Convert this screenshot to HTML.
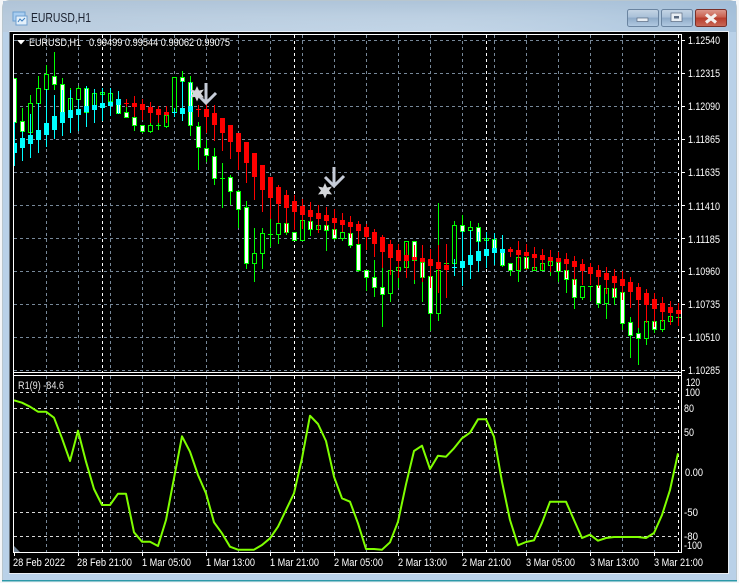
<!DOCTYPE html>
<html><head><meta charset="utf-8"><title>EURUSD,H1</title>
<style>
html,body{margin:0;padding:0;background:#f4f6f8;width:739px;height:583px;overflow:hidden}
svg{display:block;position:absolute;left:0;top:0}
text{font-family:"Liberation Sans",sans-serif;font-size:11px;fill:#fff}
</style></head><body>
<svg width="739" height="583" viewBox="0 0 739 583" xmlns="http://www.w3.org/2000/svg">
<defs>
<linearGradient id="tb" x1="0" y1="0" x2="0" y2="1"><stop offset="0" stop-color="#a9c0d6"/><stop offset=".5" stop-color="#bcd0e2"/><stop offset="1" stop-color="#c3d6e8"/></linearGradient>
<linearGradient id="tb2" x1="0" y1="0" x2="1" y2="0"><stop offset="0" stop-color="#b4c6d8" stop-opacity=".6"/><stop offset=".6" stop-color="#c0d2e4" stop-opacity=".2"/><stop offset="1" stop-color="#9dbbd8" stop-opacity=".7"/></linearGradient>
<linearGradient id="bt" x1="0" y1="0" x2="0" y2="1"><stop offset="0" stop-color="#c5d5e5"/><stop offset=".45" stop-color="#a9c0d8"/><stop offset=".5" stop-color="#8eaac8"/><stop offset="1" stop-color="#b3cbe2"/></linearGradient>
<linearGradient id="cl" x1="0" y1="0" x2="0" y2="1"><stop offset="0" stop-color="#dd9a8e"/><stop offset=".45" stop-color="#c9604f"/><stop offset=".5" stop-color="#b83c2b"/><stop offset="1" stop-color="#c96a58"/></linearGradient>
<clipPath id="up"><rect x="14" y="35" width="667" height="337"/></clipPath>
<clipPath id="lo"><rect x="14" y="376" width="667" height="176"/></clipPath>
</defs>
<!-- window frame -->
<path d="M3 580V8Q3 2 9 1H730Q736 2 736 8V580Z" fill="#b9d1e8"/>
<path d="M2.5 581V8Q2.500 1.500 9 .5H730Q736.500 1.500 736.500 8V581" fill="none" stroke="#5f7f8f" stroke-width="1" opacity=".4"/>
<rect x="3" y="1" width="733" height="31" fill="url(#tb)"/>
<rect x="3" y="1" width="733" height="31" fill="url(#tb2)"/>
<rect x="2" y="580" width="735" height="1.500" fill="#2d98a8"/>
<rect x="9" y="31" width="720" height="543" fill="#e8eef4"/>
<rect x="10" y="32" width="718" height="541" fill="#000"/>
<rect x="9" y="32" width="1" height="541" fill="#6b7680"/>
<!-- title -->
<rect x="13" y="12" width="12" height="9" fill="#a8cdf0" stroke="#6a9ed0"/>
<rect x="16" y="16" width="11" height="9" fill="#e4f0fa" stroke="#6f9fd0"/>
<path d="M18 22l2-3 2 2 3-3" fill="none" stroke="#3f80c0"/>
<text x="31" y="22" style="font-size:12.500px;fill:#1c2230" textLength="60" lengthAdjust="spacingAndGlyphs">EURUSD,H1</text>
<!-- buttons -->
<rect x="627.500" y="9.500" width="31" height="17" rx="2" fill="url(#bt)" stroke="#6a84a0"/>
<rect x="637" y="18" width="11" height="3.500" fill="#e8eef4" stroke="#5a6a80" stroke-width=".7"/>
<rect x="661.500" y="9.500" width="31" height="17" rx="2" fill="url(#bt)" stroke="#6a84a0"/>
<rect x="671" y="13" width="11" height="8.500" fill="#e8eef4" stroke="#5a6a80" stroke-width=".7"/>
<rect x="674" y="16" width="5" height="2.500" fill="#5a6a80"/>
<rect x="695.500" y="9.500" width="31" height="17" rx="2" fill="url(#cl)" stroke="#7a3028"/>
<path d="M706 14.500l10 8M716 14.500l-10 8" stroke="#f4f0ee" stroke-width="3.200" fill="none"/>
<!-- grid upper -->
<g clip-path="url(#up)" fill="none" stroke="#778899" stroke-dasharray="3 3" shape-rendering="crispEdges">
<path d="M14 40.500H678M14 73.500H678M14 106.500H678M14 139.500H678M14 172.500H678M14 205.500H678M14 238.500H678M14 271.500H678M14 304.500H678M14 337.500H678M14 370.500H678"/>
<path d="M46.500 35V372M78.500 35V372M110.500 35V372M142.500 35V372M174.500 35V372M206.500 35V372M238.500 35V372M270.500 35V372M302.500 35V372M334.500 35V372M366.500 35V372M398.500 35V372M430.500 35V372M462.500 35V372M494.500 35V372M526.500 35V372M558.500 35V372M590.500 35V372M622.500 35V372M654.500 35V372"/>
<path stroke="#fff" stroke-dasharray="3 3" d="M102.500 35V372M294.500 35V372M486.500 35V372M678.500 35V372"/>
</g>
<!-- candles upper -->
<g clip-path="url(#up)" shape-rendering="crispEdges" fill="none">
<path stroke="#0f0" d="M14.500 78V125M22.500 108V138M30.500 95V132M38.500 76V103M46.500 65V89M54.500 52V90M62.500 78V121M70.500 88V110M78.500 86V99M86.500 86V112M94.500 92V105M102.500 88V94M110.500 90V101M118.500 97V113M126.500 107V117M134.500 117V131M142.500 125V133M150.500 122V133M158.500 122V130M166.500 112V128M174.500 77V112M182.500 71V81M190.500 76V136M198.500 122V170M206.500 140V162M214.500 148V185M222.500 163V208M230.500 175V205M238.500 190V228M246.500 201V269M254.500 228V282M262.500 228V269M270.500 219V247M278.500 223V244M286.500 223V235M294.500 232V241M302.500 220V240M310.500 221V236M318.500 225V232M326.500 225V251M334.500 229V240M342.500 232V241M350.500 233V248M358.500 244V272M366.500 270V291M374.500 260V297M382.500 268V327M390.500 270V302M398.500 267V288M406.500 241V267M414.500 241V284M422.500 262V302M430.500 276V331M438.500 203V321M446.500 263V298M454.500 221V263M462.500 215V231M470.500 221V230M478.500 223V241M486.500 238V240M494.500 239V252M502.500 250V267M510.500 263V276M518.500 257V282M526.500 257V270M534.500 267V270M542.500 263V270M550.500 261V276M558.500 262V282M566.500 270V293M574.500 279V309M582.500 286V300M590.500 286V301M598.500 285V308M606.500 288V319M614.500 288V305M622.500 292V330M630.500 317V358M638.500 318V365M646.500 321V345M654.500 321V333M662.500 320V332M670.500 316V321M156 125.500H161M220 178.500H225M268 234.500H273M444 263.500H449M588 286.500H593M676 317.500H681"/>
<!-- hollow -->
<path stroke="#0f0" fill="#000" d="M28.500 103.500h4v29h-4zM36.500 88.500h4v15h-4zM44.500 74.500h4v15h-4zM68.500 98.500h4v12h-4zM76.500 88.500h4v11h-4zM92.500 93.500h4v12h-4zM100.500 92.500h4v2h-4zM108.500 93.500h4v8h-4zM148.500 125.500h4v6h-4zM164.500 115.500h4v11h-4zM172.500 77.500h4v35h-4zM252.500 253.500h4v10h-4zM260.500 233.500h4v20h-4zM276.500 223.500h4v11h-4zM300.500 220.500h4v20h-4zM316.500 225.500h4v4h-4zM340.500 232.500h4v6h-4zM388.500 270.500h4v23h-4zM396.500 267.500h4v3h-4zM404.500 241.500h4v26h-4zM436.500 270.500h4v43h-4zM452.500 225.500h4v38h-4zM468.500 227.500h4v3h-4zM484.500 238.500h4v2h-4zM516.500 257.500h4v13h-4zM532.500 267.500h4v3h-4zM540.500 263.500h4v7h-4zM548.500 261.500h4v4h-4zM580.500 286.500h4v11h-4zM604.500 288.500h4v15h-4zM644.500 321.500h4v17h-4zM660.500 320.500h4v9h-4zM668.500 316.500h4v5h-4z"/>
<!-- white -->
<path stroke="#0f0" fill="#fff" d="M12.500 78.500h4v44h-4zM20.500 121.500h4v10h-4zM52.500 76.500h4v8h-4zM60.500 84.500h4v37h-4zM84.500 88.500h4v24h-4zM116.500 99.500h4v14h-4zM124.500 112.500h4v5h-4zM132.500 117.500h4v8h-4zM140.500 125.500h4v6h-4zM180.500 77.500h4v4h-4zM188.500 82.500h4v43h-4zM196.500 126.500h4v21h-4zM204.500 148.500h4v7h-4zM212.500 156.500h4v22h-4zM228.500 177.500h4v14h-4zM236.500 191.500h4v18h-4zM244.500 207.500h4v56h-4zM284.500 223.500h4v9h-4zM292.500 232.500h4v8h-4zM308.500 221.500h4v8h-4zM324.500 225.500h4v5h-4zM332.500 229.500h4v9h-4zM348.500 233.500h4v12h-4zM356.500 244.500h4v26h-4zM364.500 270.500h4v7h-4zM372.500 277.500h4v10h-4zM380.500 287.500h4v7h-4zM412.500 241.500h4v19h-4zM420.500 262.500h4v15h-4zM428.500 276.500h4v37h-4zM460.500 225.500h4v6h-4zM476.500 227.500h4v14h-4zM492.500 239.500h4v13h-4zM500.500 250.500h4v15h-4zM508.500 263.500h4v7h-4zM524.500 257.500h4v11h-4zM556.500 262.500h4v9h-4zM564.500 270.500h4v9h-4zM572.500 279.500h4v18h-4zM596.500 285.500h4v18h-4zM612.500 288.500h4v9h-4zM620.500 292.500h4v31h-4zM628.500 322.500h4v13h-4zM636.500 333.500h4v5h-4zM652.500 321.500h4v8h-4z"/>
<!-- cyan -->
<path stroke="#0ff" d="M14.500 122V166M22.500 131V161M30.500 114V158M38.500 103V153M46.500 89V147M54.500 95V139M62.500 90V136M70.500 90V133M78.500 99V131M86.500 86V127M94.500 89V123M102.500 88V121M110.500 88V116M118.500 91V114M174.500 108V117M182.500 81V121M190.500 82V125M454.500 259V276M462.500 231V286M470.500 230V279M478.500 232V272M486.500 232V268M494.500 233V265M502.500 235V265"/>
<path fill="#0ff" d="M12 143h5v10h-5zM20 138h5v10h-5zM28 135h5v9h-5zM36 130h5v10h-5zM44 123h5v12h-5zM52 116h5v14h-5zM60 112h5v11h-5zM68 110h5v8h-5zM76 109h5v6h-5zM84 106h5v6h-5zM92 105h5v5h-5zM100 103h5v5h-5zM108 102h5v4h-5zM116 99h5v6h-5zM172 112h5v1h-5zM180 108h5v6h-5zM188 106h5v6h-5zM452 267h5v1h-5zM460 261h5v7h-5zM468 255h5v10h-5zM476 251h5v10h-5zM484 249h5v7h-5zM492 248h5v5h-5zM500 249h5v4h-5z"/>
<!-- red -->
<path stroke="#f00" d="M126.500 99V107M134.500 96V117M142.500 99V120M150.500 102V123M158.500 106V123M166.500 106V123M198.500 105V117M206.500 102V133M214.500 105V141M222.500 118V151M230.500 125V159M238.500 133V170M246.500 142V183M254.500 153V200M262.500 165V212M270.500 177V219M278.500 185V223M286.500 190V233M294.500 195V230M302.500 199V229M310.500 202V229M318.500 205V233M326.500 207V230M334.500 209V235M342.500 213V232M350.500 216V238M358.500 221V244M366.500 224V250M374.500 229V257M382.500 235V268M390.500 240V275M398.500 244V278M406.500 243V278M414.500 245V280M422.500 245V282M430.500 249V288M438.500 245V293M446.500 244V298M510.500 247V257M518.500 241V270M526.500 244V270M534.500 247V270M542.500 249V270M550.500 250V272M558.500 252V271M566.500 253V278M574.500 256V285M582.500 259V285M590.500 263V285M598.500 265V288M606.500 267V294M614.500 269V297M622.500 271V300M630.500 277V308M638.500 283V328M646.500 289V323M654.500 293V327M662.500 297V322M670.500 301V325M678.500 303V326"/>
<path fill="#f00" d="M124 103h5v1h-5zM132 103h5v4h-5zM140 104h5v6h-5zM148 107h5v6h-5zM156 109h5v6h-5zM164 112h5v3h-5zM196 109h5v1h-5zM204 109h5v8h-5zM212 113h5v12h-5zM220 118h5v15h-5zM228 125h5v17h-5zM236 133h5v19h-5zM244 142h5v21h-5zM252 153h5v24h-5zM260 165h5v25h-5zM268 177h5v21h-5zM276 187h5v17h-5zM284 195h5v13h-5zM292 201h5v11h-5zM300 206h5v9h-5zM308 210h5v7h-5zM316 213h5v6h-5zM324 215h5v6h-5zM332 218h5v5h-5zM340 220h5v5h-5zM348 222h5v5h-5zM356 224h5v7h-5zM364 227h5v10h-5zM372 232h5v12h-5zM380 237h5v15h-5zM388 244h5v14h-5zM396 250h5v11h-5zM404 255h5v6h-5zM412 257h5v3h-5zM420 258h5v4h-5zM428 259h5v7h-5zM436 262h5v7h-5zM444 265h5v5h-5zM508 249h5v3h-5zM516 250h5v5h-5zM524 252h5v4h-5zM532 254h5v4h-5zM540 255h5v5h-5zM548 257h5v4h-5zM556 258h5v4h-5zM564 259h5v5h-5zM572 261h5v6h-5zM580 264h5v7h-5zM588 267h5v7h-5zM596 270h5v7h-5zM604 273h5v7h-5zM612 276h5v7h-5zM620 279h5v7h-5zM628 282h5v10h-5zM636 287h5v13h-5zM644 293h5v12h-5zM652 299h5v10h-5zM660 303h5v9h-5zM668 307h5v6h-5zM676 310h5v4h-5z"/>
</g>
<!-- arrows and stars -->
<g fill="none" stroke-linejoin="miter">
<path d="M206 83V102M197 94l9 9 10-10" stroke="#c6ccd8" stroke-width="3"/>
<path d="M334 167V186M325 177l9 9 10-10" stroke="#c6ccd8" stroke-width="3"/>
</g>
<path fill="#d4d6da" d="M197 86l2 4.500 5-1-3 4 3 4-5-.500-2 4.500-2-4.500-5 .500 3-4-3-4 5 1z"/>
<path fill="#d4d6da" d="M325 183l2 4.500 5-1-3 4 3 4-5-.500-2 4.500-2-4.500-5 .500 3-4-3-4 5 1z"/>
<!-- grid lower -->
<g clip-path="url(#lo)" fill="none" shape-rendering="crispEdges">
<path stroke="#778899" stroke-dasharray="3 3" d="M46.500 376V552M78.500 376V552M110.500 376V552M142.500 376V552M174.500 376V552M206.500 376V552M238.500 376V552M270.500 376V552M302.500 376V552M334.500 376V552M366.500 376V552M398.500 376V552M430.500 376V552M462.500 376V552M494.500 376V552M526.500 376V552M558.500 376V552M590.500 376V552M622.500 376V552M654.500 376V552"/>
<path stroke="#fff" stroke-dasharray="3 3" d="M102.500 376V552M294.500 376V552M486.500 376V552M678.500 376V552"/>
<path stroke="#d8d8d8" stroke-dasharray="3 3" d="M14 392.500H678M14 408.500H678M14 432.500H678M14 472.500H678M14 512.500H678M14 536.500H678"/>
</g>
<polyline clip-path="url(#lo)" fill="none" stroke="#7fff00" stroke-width="2" stroke-linejoin="round" points="14,400.300 22,402.700 30,406.700 38,411.700 46,411.700 54,417.700 62,438.300 70,461 78,430.700 86,461.700 94,489 102,505 110,505 118,493.700 126,493.700 134,532.300 142,541.700 150,541.700 158,546 166,520 174,478.300 182,436.300 190,451.700 198,475 206,493.300 214,522.300 222,533.300 230,546.700 238,549.700 246,549.700 254,549.700 262,545 270,538.300 278,526.700 286,510 294,493.300 302,458.300 310,415.700 318,424 326,441 334,476.700 342,498.300 350,501.700 358,523.300 366,549 374,549 382,549.700 390,542.300 398,521.700 406,484.300 414,451 422,445.700 430,469 438,455.700 446,456.700 454,448.300 462,438.300 470,432.700 478,419.300 486,419.300 494,436.700 502,481.700 510,520 518,545.300 526,542 534,540.300 542,522.700 550,501.700 558,501.700 566,501.700 574,520 582,538 590,534.700 598,540.700 606,538 614,537 622,537 630,537 638,537 646,538 654,533 662,515 670,490 678,453.300"/>
<!-- pane borders -->
<g fill="#fff" shape-rendering="crispEdges">
<rect x="13" y="34" width="668" height="1"/>
<rect x="13" y="34" width="1" height="519"/>
<rect x="13" y="372" width="668" height="1"/>
<rect x="13" y="375" width="668" height="1"/>
<rect x="13" y="552" width="668" height="1"/>
<rect x="681" y="34" width="1" height="519"/>
</g>
<!-- axis ticks -->
<path shape-rendering="crispEdges" stroke="#fff" fill="none" d="M682 40.500h3M682 73.500h3M682 106.500h3M682 139.500h3M682 172.500h3M682 205.500h3M682 238.500h3M682 271.500h3M682 304.500h3M682 337.500h3M682 370.500h3M14.500 553v3M78.500 553v3M142.500 553v3M206.500 553v3M270.500 553v3M334.500 553v3M398.500 553v3M462.500 553v3M526.500 553v3M590.500 553v3M654.500 553v3"/>
<path d="M14 546l6 6h-6z" fill="#708090"/>
<path d="M17 40h8l-4 4.500z" fill="#fff"/>
<!-- labels -->
<text x="29" y="46" textLength="52" lengthAdjust="spacingAndGlyphs">EURUSD,H1</text>
<text x="89" y="46" textLength="141" lengthAdjust="spacingAndGlyphs">0.99499 0.99544 0.99062 0.99075</text>
<text x="18" y="389" textLength="46" lengthAdjust="spacingAndGlyphs" style="fill:#e4e4e4">R1(9) -84.6</text>
<g>
<text x="688" y="44" textLength="32" lengthAdjust="spacingAndGlyphs">1.12540</text>
<text x="688" y="77" textLength="32" lengthAdjust="spacingAndGlyphs">1.12315</text>
<text x="688" y="110" textLength="32" lengthAdjust="spacingAndGlyphs">1.12090</text>
<text x="688" y="143" textLength="32" lengthAdjust="spacingAndGlyphs">1.11865</text>
<text x="688" y="176" textLength="32" lengthAdjust="spacingAndGlyphs">1.11635</text>
<text x="688" y="210" textLength="32" lengthAdjust="spacingAndGlyphs">1.11410</text>
<text x="688" y="243" textLength="32" lengthAdjust="spacingAndGlyphs">1.11185</text>
<text x="688" y="275" textLength="32" lengthAdjust="spacingAndGlyphs">1.10960</text>
<text x="688" y="308" textLength="32" lengthAdjust="spacingAndGlyphs">1.10735</text>
<text x="688" y="341" textLength="32" lengthAdjust="spacingAndGlyphs">1.10510</text>
<text x="688" y="374" textLength="32" lengthAdjust="spacingAndGlyphs">1.10285</text>
<text x="686" y="386" textLength="14" lengthAdjust="spacingAndGlyphs">120</text>
<text x="685" y="396" textLength="15" lengthAdjust="spacingAndGlyphs">100</text>
<text x="684" y="412" textLength="10" lengthAdjust="spacingAndGlyphs">80</text>
<text x="684" y="436" textLength="10" lengthAdjust="spacingAndGlyphs">50</text>
<text x="685" y="476" textLength="18" lengthAdjust="spacingAndGlyphs">0.00</text>
<text x="684" y="516" textLength="14" lengthAdjust="spacingAndGlyphs">-50</text>
<text x="684" y="540" textLength="14" lengthAdjust="spacingAndGlyphs">-80</text>
<text x="684" y="549" textLength="18" lengthAdjust="spacingAndGlyphs">-100</text>
</g>
<g>
<text x="13" y="566" textLength="52" lengthAdjust="spacingAndGlyphs">28 Feb 2022</text>
<text x="77" y="566" textLength="55" lengthAdjust="spacingAndGlyphs">28 Feb 21:00</text>
<text x="142" y="566" textLength="49" lengthAdjust="spacingAndGlyphs">1 Mar 05:00</text>
<text x="206" y="566" textLength="49" lengthAdjust="spacingAndGlyphs">1 Mar 13:00</text>
<text x="270" y="566" textLength="49" lengthAdjust="spacingAndGlyphs">1 Mar 21:00</text>
<text x="334" y="566" textLength="49" lengthAdjust="spacingAndGlyphs">2 Mar 05:00</text>
<text x="398" y="566" textLength="49" lengthAdjust="spacingAndGlyphs">2 Mar 13:00</text>
<text x="462" y="566" textLength="49" lengthAdjust="spacingAndGlyphs">2 Mar 21:00</text>
<text x="526" y="566" textLength="49" lengthAdjust="spacingAndGlyphs">3 Mar 05:00</text>
<text x="590" y="566" textLength="49" lengthAdjust="spacingAndGlyphs">3 Mar 13:00</text>
<text x="654" y="566" textLength="49" lengthAdjust="spacingAndGlyphs">3 Mar 21:00</text>
</g>
</svg>
</body></html>
